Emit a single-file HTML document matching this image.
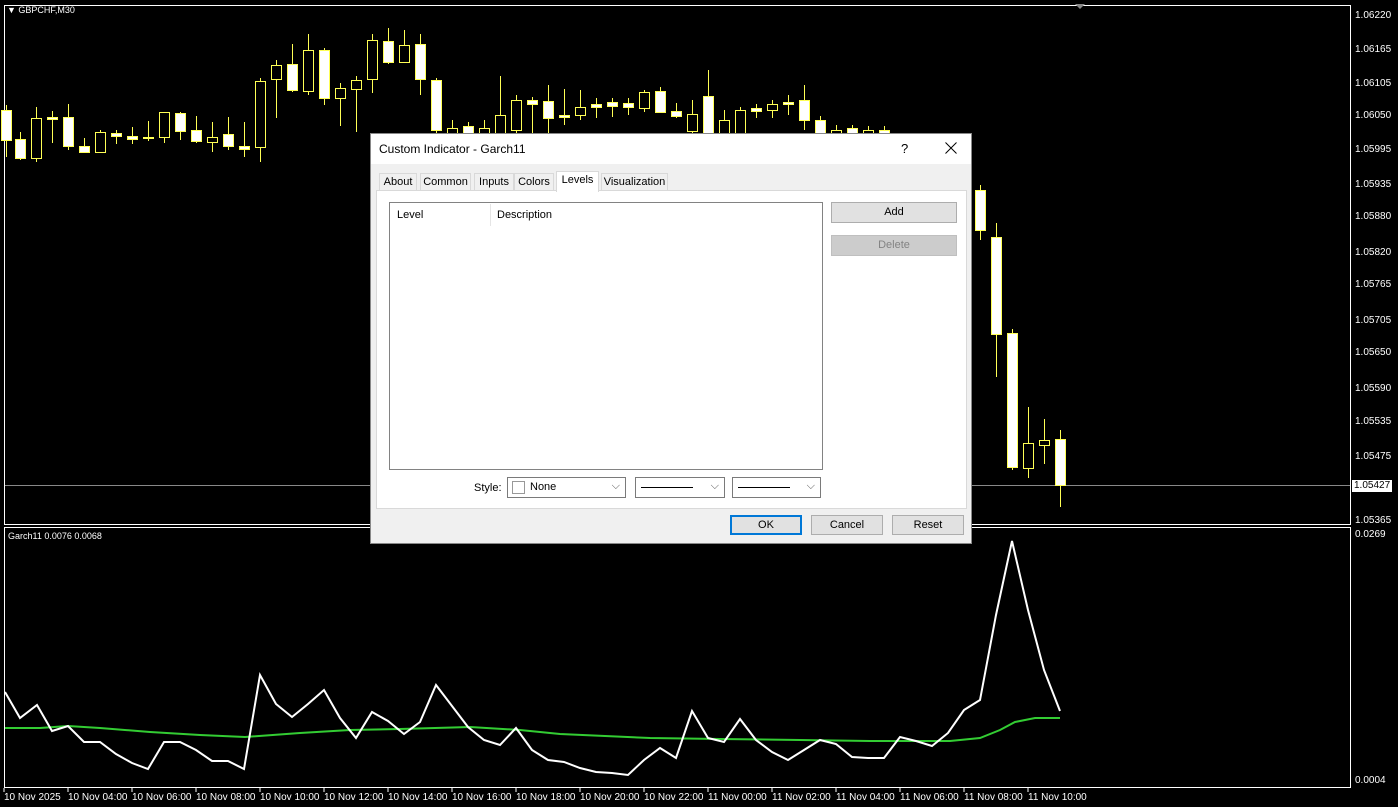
<!DOCTYPE html>
<html><head><meta charset="utf-8"><style>
*{margin:0;padding:0;box-sizing:border-box}
body{width:1398px;height:807px;background:#000;overflow:hidden;position:relative;font-family:"Liberation Sans",sans-serif}
.ax{position:absolute;left:1355px;color:#fff;font-size:10px;line-height:10px}
.tl{position:absolute;top:792px;color:#fff;font-size:10px}
#dlg{position:absolute;left:370px;top:133px;width:602px;height:411px;background:#f0f0f0;border:1px solid #888;font-size:11px;color:#000}
.btn{position:absolute;background:#e1e1e1;border:1px solid #adadad;text-align:center;font-size:11px;line-height:18px}
.tab{position:absolute;top:39px;height:18px;border:1px solid #d9d9d9;border-bottom:none;background:#f0f0f0;font-size:11px;line-height:16px;text-align:center}
.sel{position:absolute;top:343px;height:21px;border:1px solid #7a7a7a;background:#fff}
</style></head><body>
<svg id="s" width="1398" height="807" style="position:absolute;left:0;top:0"></svg>
<div style="position:absolute;left:7px;top:5px;color:#fff;font-size:9px">▼ GBPCHF,M30</div>
<div style="position:absolute;left:8px;top:531px;color:#fff;font-size:9px">Garch11 0.0076 0.0068</div>
<div class="ax" style="top:11px">1.06220</div><div class="ax" style="top:45px">1.06165</div><div class="ax" style="top:79px">1.06105</div><div class="ax" style="top:111px">1.06050</div><div class="ax" style="top:145px">1.05995</div><div class="ax" style="top:180px">1.05935</div><div class="ax" style="top:212px">1.05880</div><div class="ax" style="top:248px">1.05820</div><div class="ax" style="top:280px">1.05765</div><div class="ax" style="top:316px">1.05705</div><div class="ax" style="top:348px">1.05650</div><div class="ax" style="top:384px">1.05590</div><div class="ax" style="top:417px">1.05535</div><div class="ax" style="top:452px">1.05475</div>
<div class="ax" style="top:480px;left:1352px;background:#fff;color:#000;padding:1px 2px">1.05427</div>
<div class="ax" style="top:516px">1.05365</div><div class="ax" style="top:530px">0.0269</div><div class="ax" style="top:776px">0.0004</div>
<div class="tl" style="left:4px">10 Nov 2025</div>
<div class="tl" style="left:68px">10 Nov 04:00</div><div class="tl" style="left:132px">10 Nov 06:00</div><div class="tl" style="left:196px">10 Nov 08:00</div><div class="tl" style="left:260px">10 Nov 10:00</div><div class="tl" style="left:324px">10 Nov 12:00</div><div class="tl" style="left:388px">10 Nov 14:00</div><div class="tl" style="left:452px">10 Nov 16:00</div><div class="tl" style="left:516px">10 Nov 18:00</div><div class="tl" style="left:580px">10 Nov 20:00</div><div class="tl" style="left:644px">10 Nov 22:00</div><div class="tl" style="left:708px">11 Nov 00:00</div><div class="tl" style="left:772px">11 Nov 02:00</div><div class="tl" style="left:836px">11 Nov 04:00</div><div class="tl" style="left:900px">11 Nov 06:00</div><div class="tl" style="left:964px">11 Nov 08:00</div><div class="tl" style="left:1028px">11 Nov 10:00</div>

<div id="dlg">
<div style="position:absolute;left:0;top:0;width:600px;height:30px;background:#fff"></div>
<div style="position:absolute;left:8px;top:8px;font-size:12px">Custom Indicator - Garch11</div>
<div style="position:absolute;left:530px;top:7px;font-size:13px">?</div>
<svg style="position:absolute;left:574px;top:8px" width="12" height="12"><path d="M0.5 0.5L11.5 11.5M11.5 0.5L0.5 11.5" stroke="#000" stroke-width="1"/></svg>
<div class="tab" style="left:8px;width:38px">About</div>
<div class="tab" style="left:49px;width:51px">Common</div>
<div class="tab" style="left:103px;width:40px">Inputs</div>
<div class="tab" style="left:143px;width:40px">Colors</div>
<div class="tab" style="left:185px;top:37px;height:21px;width:43px;background:#fff;z-index:2">Levels</div>
<div class="tab" style="left:230px;width:67px">Visualization</div>
<div style="position:absolute;left:5px;top:56px;width:591px;height:319px;background:#fff;border:1px solid #d9d9d9"></div>
<div style="position:absolute;left:18px;top:68px;width:434px;height:268px;background:#fff;border:1px solid #828282"></div>
<div style="position:absolute;left:26px;top:75px">Level</div>
<div style="position:absolute;left:119px;top:70px;width:1px;height:22px;background:#e5e5e5"></div>
<div style="position:absolute;left:126px;top:75px">Description</div>
<div class="btn" style="left:460px;top:68px;width:126px;height:21px">Add</div>
<div class="btn" style="left:460px;top:101px;width:126px;height:21px;background:#ccc;border-color:#bfbfbf;color:#838383">Delete</div>
<div style="position:absolute;left:103px;top:348px">Style:</div>
<div class="sel" style="left:136px;width:119px"><div style="position:absolute;left:4px;top:3px;width:13px;height:13px;border:1px solid #999"></div><span style="position:absolute;left:22px;top:3px">None</span><span style="position:absolute;right:5px;top:2px;color:#555">⌵</span></div>
<div class="sel" style="left:264px;width:90px"><div style="position:absolute;left:5px;top:9px;width:52px;height:1px;background:#000"></div><span style="position:absolute;right:5px;top:2px;color:#555">⌵</span></div>
<div class="sel" style="left:361px;width:89px"><div style="position:absolute;left:5px;top:9px;width:52px;height:1px;background:#000"></div><span style="position:absolute;right:5px;top:2px;color:#555">⌵</span></div>
<div class="btn" style="left:359px;top:381px;width:72px;height:20px;border:2px solid #0078d7;line-height:16px">OK</div>
<div class="btn" style="left:440px;top:381px;width:72px;height:20px">Cancel</div>
<div class="btn" style="left:521px;top:381px;width:72px;height:20px">Reset</div>
</div>
<script>
var s=document.getElementById('s'),h='';
h+='<rect x="4.5" y="5.5" width="1346" height="519" fill="none" stroke="#fff"/>';
h+='<rect x="4.5" y="527.5" width="1346" height="260" fill="none" stroke="#fff"/>';
h+='<line x1="5" y1="485.5" x2="1350" y2="485.5" stroke="#888"/>';
h+='<path d="M1075 4h10l-5 5z" fill="#888"/>';
for(var i=0;i<17;i++){var x=4+i*64;h+='<line x1="'+x+'" y1="788" x2="'+x+'" y2="792" stroke="#fff"/>';}
var c=[[6,105,110,140,157,1],[20,132,139,158,160,1],[36,107,118,158,162,0],[52,111,117,119,143,1],[68,104,117,146,150,1],[84,138,146,152,152,1],[100,130,132,152,153,0],[116,130,133,136,144,1],[132,127,136,139,144,1],[148,121,137,138,141,1],[164,112,112,137,143,0],[180,112,113,131,140,1],[196,116,130,141,143,1],[212,122,137,142,152,0],[228,117,134,146,150,1],[244,122,146,149,157,1],[260,78,81,147,162,0],[276,60,65,79,118,0],[292,44,64,90,92,1],[308,34,50,91,95,0],[324,48,50,98,105,1],[340,83,88,98,126,0],[356,76,80,89,132,0],[372,34,40,79,93,0],[388,28,41,62,64,1],[404,30,45,62,63,0],[420,34,44,79,95,1],[436,78,80,130,135,1],[452,120,128,134,140,0],[468,122,126,134,140,1],[484,120,128,134,140,0],[500,76,115,133,140,0],[516,95,100,130,140,0],[532,97,100,104,133,1],[548,85,101,118,133,1],[564,89,115,117,125,1],[580,90,107,115,120,0],[596,98,104,107,118,1],[612,98,102,106,117,1],[628,98,103,107,115,1],[644,90,92,108,112,0],[660,87,91,112,112,1],[676,103,111,116,118,1],[692,100,114,131,133,0],[708,70,96,133,140,1],[724,110,120,133,140,0],[740,107,110,133,140,0],[756,104,108,111,118,1],[772,100,104,110,118,0],[788,95,102,104,115,1],[804,85,100,120,130,1],[820,116,120,133,140,1],[836,125,130,136,140,0],[852,125,128,134,140,1],[868,126,130,135,140,0],[884,126,130,136,140,1],[980,185,190,230,240,1],[996,223,237,334,377,1],[1012,329,333,467,470,1],[1028,407,443,468,478,0],[1044,419,440,445,464,0],[1060,430,439,485,507,1]];
c.forEach(function(d){h+='<line x1="'+d[0]+'.5" y1="'+d[1]+'" x2="'+d[0]+'.5" y2="'+d[4]+'" stroke="#ff5"/>';h+='<rect x="'+(d[0]-4.5)+'" y="'+d[2]+'.5" width="10" height="'+Math.max(1,d[3]-d[2])+'" fill="'+(d[5]?'#fff':'#000')+'" stroke="#ff5"/>';});
var w=[[5,692],[20,718],[37,705],[52,731],[68,726],[84,742],[100,742],[116,754],[132,763],[148,769],[164,742],[180,742],[196,750],[212,761],[228,761],[244,769],[260,675],[276,704],[292,717],[308,704],[324,690],[340,718],[356,738],[372,712],[388,721],[404,734],[420,722],[436,685],[452,706],[468,727],[484,740],[500,745],[516,728],[532,750],[548,760],[564,762],[580,768],[596,772],[612,773],[628,775],[644,760],[660,748],[676,758],[692,711],[708,738],[724,742],[740,719],[756,740],[772,752],[788,760],[804,750],[820,740],[836,744],[852,757],[868,758],[884,758],[900,737],[916,741],[932,746],[948,733],[964,710],[980,700],[996,615],[1012,541],[1028,610],[1044,670],[1060,711]];
var g=[[5,728],[40,728],[68,726],[100,728],[150,732],[200,735],[245,737],[300,733],[350,730],[400,729],[470,727],[520,730],[560,734],[650,738],[720,739],[800,740],[870,741],[950,741],[980,738],[1000,730],[1015,722],[1035,718],[1060,718]];
function P(a){return a.map(function(p){return p.join(',')}).join(' ')}
h+='<polyline points="'+P(g)+'" fill="none" stroke="#3c3" stroke-width="2"/>';
h+='<polyline points="'+P(w)+'" fill="none" stroke="#fff" stroke-width="2"/>';
s.innerHTML=h;
</script>
</body></html>
